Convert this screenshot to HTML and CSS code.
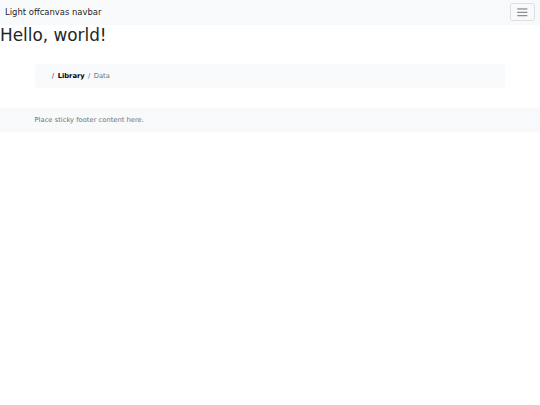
FILE: index.html
```html
<!DOCTYPE html>
<html lang="en">
<head>
<meta charset="utf-8">
<title>Light offcanvas navbar</title>
<link rel="stylesheet" href="styles.css">
</head>
<body>
<nav class="navbar">
  <div class="navbar-inner">
    <a class="brand" href="#">Light offcanvas navbar</a>
    <button class="toggler" type="button" aria-label="Toggle navigation">
      <svg class="toggler-icon" viewBox="0 0 30 30" aria-hidden="true">
        <path d="M4 7h22M4 15h22M4 23h22" stroke="rgba(33,37,41,0.75)" stroke-width="2" stroke-linecap="round" stroke-miterlimit="10"/>
      </svg>
    </button>
  </div>
</nav>
<main class="main">
  <h1 class="title">Hello, world!</h1>
  <div class="container">
    <nav class="crumbs" aria-label="breadcrumb">
      <ol class="crumb-list">
        <li class="crumb-item"></li>
        <li class="crumb-item crumb-link">Library</li>
        <li class="crumb-item crumb-active">Data</li>
      </ol>
    </nav>
  </div>
</main>
<footer class="footer">
  <div class="container">
    <span class="footer-text">Place sticky footer content here.</span>
  </div>
</footer>
</body>
</html>
```

FILE: styles.css
```css
* {
  box-sizing: border-box;
}

html, body {
  margin: 0;
  padding: 0;
  background: #fff;
}

body {
  font-family: "DejaVu Sans", sans-serif;
  font-size: 6.75px;
  line-height: 1.5;
  color: #212529;
}

.navbar {
  background: #f8f9fa;
  padding: 3.375px 0;
}

.navbar-inner {
  display: flex;
  align-items: center;
  justify-content: space-between;
  padding: 0 5.06px;
}

.brand {
  font-size: 8.4375px;
  line-height: 1.5;
  padding: 2.11px 0;
  color: rgba(0, 0, 0, 0.9);
  text-decoration: none;
}

.toggler {
  display: flex;
  align-items: center;
  justify-content: center;
  padding: 1.69px 5.06px;
  font-size: 8.4375px;
  line-height: 1;
  background: transparent;
  border: 1px solid rgba(0, 0, 0, 0.1);
  border-radius: 2.5px;
  margin: 0;
}

.toggler-icon {
  width: 12.66px;
  height: 12.66px;
  display: block;
}

.main {
  display: flow-root;
}

.title {
  margin: 0 0 3.375px;
  font-size: 16.875px;
  line-height: 1.2;
  font-weight: 500;
  color: #212529;
}

.container {
  max-width: 481px;
  margin: 0 auto;
  padding: 0 5.06px;
}

.crumbs {
  margin-top: 19px;
}

.crumb-list {
  list-style: none;
  display: flex;
  margin: 0;
  padding: 6.75px 13.9px;
  background: #f8f9fa;
  border-radius: 2.5px;
  line-height: 10.125px;
}

.crumb-item + .crumb-item {
  padding-left: 3.375px;
}

.crumb-item + .crumb-item::before {
  content: "/";
  float: left;
  padding-right: 3.375px;
  color: #6c757d;
}

.crumb-link {
  font-weight: 700;
  color: #000;
}

.crumb-active {
  color: #6c757d;
}

.footer {
  margin-top: 20.7px;
  background: #f8f9fa;
  padding: 6.75px 0;
}

.footer-text {
  color: #6c757d;
}
```
